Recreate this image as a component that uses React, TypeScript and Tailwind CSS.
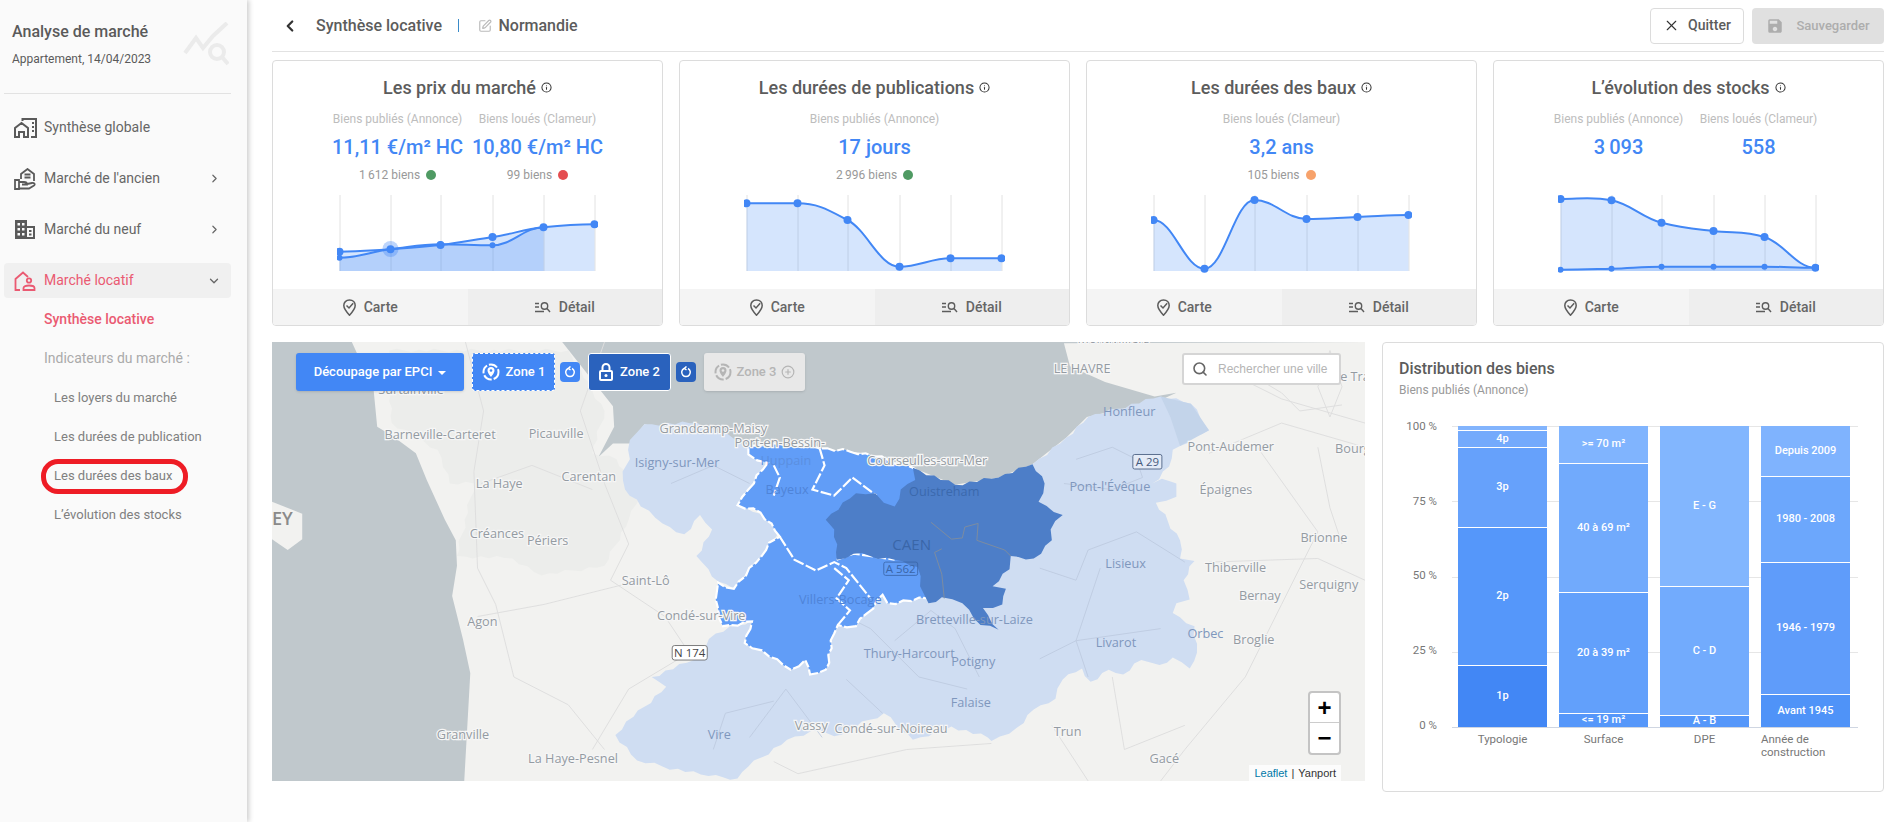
import { ChevronDown, ChevronLeft, ChevronRight, CirclePlus, Info, Search, SquarePen, X } from "lucide-react";
import { MdSave } from "react-icons/md";

const XS = [0, 51, 101, 153, 204, 255];

const smooth = (ys: number[]) => {
  const pts = ys.map((y, i) => [XS[i], y]);
  let d = `M${pts[0][0]} ${pts[0][1]}`;
  for (let i = 0; i < pts.length - 1; i++) {
    const p0 = pts[Math.max(i - 1, 0)];
    const p1 = pts[i];
    const p2 = pts[i + 1];
    const p3 = pts[Math.min(i + 2, pts.length - 1)];
    const flat1 = (p1[1] - p0[1]) * (p2[1] - p1[1]) <= 0;
    const flat2 = (p2[1] - p1[1]) * (p3[1] - p2[1]) <= 0;
    const c1y = p1[1] + (flat1 ? 0 : (p2[1] - p0[1]) / 6);
    const c2y = p2[1] - (flat2 ? 0 : (p3[1] - p1[1]) / 6);
    d += `C${p1[0] + 20} ${c1y} ${p2[0] - 20} ${c2y} ${p2[0]} ${p2[1]}`;
  }
  return d;
};

const Spark = ({ series, halo }: { series: { ys: number[]; r: number }[]; halo?: boolean }) => (
  <svg width="261" height="80" viewBox="-2.500 0 261 80" className="mx-auto mt-3 block">
    {XS.map((x) => (
      <line key={x} x1={x + 0.5} x2={x + 0.5} y1="0" y2="76" stroke="#e2e2e2" strokeWidth="1" />
    ))}
    {series.map((s, i) => (
      <path key={i} d={`${smooth(s.ys)}L${XS[s.ys.length - 1]} 76L0 76Z`} fill="#4287f5" fillOpacity="0.22" />
    ))}
    {halo && <circle cx="51" cy="54" r="8" fill="#4287f5" fillOpacity="0.35" />}
    {series.map((s, i) => (
      <g key={i}>
        <path d={smooth(s.ys)} fill="none" stroke="#4287f5" strokeWidth="2" />
        {s.ys.map((y, j) => (
          <circle key={j} cx={XS[j]} cy={y} r={s.r} fill="#4287f5" />
        ))}
      </g>
    ))}
  </svg>
);

const PinCheckIcon = () => (
  <svg width="13" height="17" viewBox="0 0 13 17" fill="none" stroke="#5c5c5c" strokeWidth="1.500">
    <path d="M6.500 1C3 1 .8 3.500.8 6.500c0 3.500 5.700 9.700 5.700 9.700s5.700-6.200 5.700-9.700C12.200 3.500 10 1 6.500 1z" />
    <path d="M3.500 6.500l2.500 2.500 4.200-4.800" />
  </svg>
);

const DetailIcon = () => (
  <svg width="16" height="14" viewBox="0 0 16 14" fill="none" stroke="#5c5c5c" strokeWidth="1.400">
    <path d="M0 3.500h4M0 7h4M0 11.500h9" />
    <circle cx="9.500" cy="6" r="3.200" />
    <path d="M12 8.500l3 3.500" />
  </svg>
);

type Col = { label: string; value: string; biens?: string; dot?: string };

const Card = ({ title, cols, children }: { title: string; cols: Col[]; children: React.ReactNode }) => (
  <div className="flex h-[266px] flex-col overflow-hidden rounded border border-[#dcdcdc] bg-white">
    <div className="mt-[15px] flex h-[22px] items-center justify-center gap-[5px] text-[18px] font-medium text-[#5c5c5c]">
      {title}
      <Info size={11} strokeWidth={2.2} className="text-[#333]" />
    </div>
    <div className="flex justify-center">
      {cols.map((c) => (
        <div key={c.label} className="w-[140px] text-center">
          <div className="mt-[13px] h-4 text-[12px] leading-4 whitespace-nowrap text-[#bdbdbd]">{c.label}</div>
          <div className="mt-[6px] h-7 text-[20px] leading-7 font-medium whitespace-nowrap text-[#4287f5]">{c.value}</div>
          <div className="mt-[6px] flex h-4 items-center justify-center gap-[6px] text-[12px] text-[#999]">
            {c.biens}
            {c.dot && <span className={`h-[10px] w-[10px] rounded-full ${c.dot}`} />}
          </div>
        </div>
      ))}
    </div>
    {children}
    <div className="mt-auto flex h-9 text-[14px] font-medium text-[#666]">
      <div className="flex flex-1 items-center justify-center gap-2 bg-[#f4f4f4]">
        <PinCheckIcon />
        Carte
      </div>
      <div className="flex flex-1 items-center justify-center gap-2 bg-[#eeeeee]">
        <DetailIcon />
        Détail
      </div>
    </div>
  </div>
);

const NavRow = ({ icon, label, chevron }: { icon: React.ReactNode; label: string; chevron?: boolean }) => (
  <div className="mb-4 ml-1 flex h-[35px] w-[227px] items-center text-[14px] text-[#666]">
    <span className="flex w-10 justify-center pl-[2px]">{icon}</span>
    {label}
    {chevron && <ChevronRight size={13} strokeWidth={2.2} className="ml-auto mr-[10px] text-[#666]" />}
  </div>
);

const Sidebar = () => (
  <aside className="z-10 w-[247px] shrink-0 bg-[#fafafa] shadow-[2px_0_5px_rgba(0,0,0,0.2)]">
    <div className="relative mx-1 h-[94px] w-[227px] border-b border-[#e2e2e2] pl-2 pt-[22px]">
      <div className="h-5 text-[16px] leading-5 font-medium text-[#5a5a5a]">Analyse de marché</div>
      <div className="mt-[9px] text-[12px] leading-4 text-[#5a5a5a]">Appartement, 14/04/2023</div>
      <svg width="46" height="44" viewBox="0 0 46 44" fill="none" stroke="#ebebeb" strokeWidth="4" className="absolute left-[179px] top-[22px]">
        <path d="M2 31L13 16l7 10 10-12L44 1" />
        <circle cx="34" cy="30" r="7" />
        <path d="M39 35l6 7" />
      </svg>
    </div>
    <div className="pt-4">
      <NavRow
        label="Synthèse globale"
        icon={
          <svg width="23" height="20" viewBox="0 0 23 20" fill="none" stroke="#5a5a5a" strokeWidth="2">
            <path d="M1 19v-9l6.500-5 6.500 5v9h-4v-5H5v5z" />
            <path d="M8.500 3V1H22v18h-5" />
            <path d="M18 5h2M18 9h2M18 13h2" />
          </svg>
        }
      />
      <NavRow
        chevron
        label="Marché de l'ancien"
        icon={
          <svg width="22" height="22" viewBox="0 0 22 22" fill="none" stroke="#5a5a5a" strokeWidth="1.800">
            <path d="M7 11V6l6.500-5L20 6v7" />
            <path d="M10.500 6.500h6M10.500 9.500h6" />
            <path d="M1 12h4v9H1zM5 14h5c2 0 3 1 3 2.500H8M13 16l5-1c2.500-.3 3.500 1.500 2 2.500L15 20.500H5" />
          </svg>
        }
      />
      <NavRow
        chevron
        label="Marché du neuf"
        icon={
          <svg width="20" height="19" viewBox="0 0 20 19" fill="#5a5a5a">
            <path fillRule="evenodd" d="M0 0h12v6h8v13H0zM2.500 3v2.500H5V3zM7 3v2.500h2.500V3zM2.500 8v2.500H5V8zM7 8v2.500h2.500V8zM2.500 13v2.500H5V13zM7 13v2.500h2.500V13zM12 8v9h6V8zM14 10h2.500v2H14zM14 13.500h2.500v2H14z" />
          </svg>
        }
      />
      <div className="ml-1 flex h-[35px] w-[227px] items-center rounded bg-[#f0f0f0] text-[14px] text-[#ea5a72]">
        <span className="flex w-10 justify-center pl-[2px]">
          <svg width="22" height="20" viewBox="0 0 22 20" fill="none" stroke="#ea5a72" strokeWidth="1.800">
            <path d="M6 19H1.500V8L9 1.500l5 4.500" />
            <circle cx="15" cy="9.500" r="2.200" />
            <path d="M9.500 19v-2c0-1.700 2.500-2.500 5.500-2.500s5.500.8 5.500 2.500v2z" />
          </svg>
        </span>
        Marché locatif
        <ChevronDown size={14} strokeWidth={2.2} className="ml-auto mr-[10px] text-[#666]" />
      </div>
      <div className="mt-[9px] flex flex-col gap-[15px] pl-11 text-[14px]">
        <div className="h-6 leading-6 font-medium text-[#ea5a72]">Synthèse locative</div>
        <div className="h-6 leading-6 text-[#aaaaaa]">Indicateurs du marché :</div>
        {["Les loyers du marché", "Les durées de publication", "Les durées des baux", "L’évolution des stocks"].map((t) => (
          <div key={t} className="relative top-[1px] h-6 pl-[10px] text-[13px] leading-6 text-[#808080]">
            {t}
            {t === "Les durées des baux" && (
              <span className="absolute -left-[3px] -top-[5px] h-[35px] w-[147px] rounded-[17px] border-[5px] border-[#ee1c25]" />
            )}
          </div>
        ))}
      </div>
    </div>
  </aside>
);

const Header = () => (
  <div className="flex h-[52px] items-center border-b border-[#e2e2e2] text-[#5c5c5c]">
    <ChevronLeft size={18} strokeWidth={3} className="ml-[9px] text-[#333]" />
    <span className="ml-[17px] text-[16px] font-medium">Synthèse locative</span>
    <span className="ml-4 h-[13px] w-[1.500px] bg-[#3a8bc9]" />
    <SquarePen size={14} className="ml-[19px] text-[#bbbbbb]" />
    <span className="ml-[6px] text-[16px] font-medium">Normandie</span>
    <button className="ml-auto flex h-9 w-[94px] items-center justify-center gap-2 rounded border border-[#dcdcdc] bg-white text-[14px] font-medium text-[#5c5c5c]">
      <X size={17} strokeWidth={1.600} className="text-[#333]" />
      Quitter
    </button>
    <button className="ml-2 flex h-9 w-[132px] items-center justify-center gap-3 rounded bg-[#e0e0e0] text-[13px] font-medium text-[#adadad]">
      <MdSave size={18} />
      Sauvegarder
    </button>
  </div>
);

const ZoneIcon = ({ color }: { color: string }) => (
  <svg width="18" height="18" viewBox="0 0 18 18" fill="none">
    <circle cx="9" cy="9" r="7.500" stroke={color} strokeWidth="2" strokeDasharray="9 2" />
    <path d="M9 4a3.500 3.500 0 0 1 3.500 3.500C12.500 10 9 14 9 14S5.500 10 5.500 7.500A3.500 3.500 0 0 1 9 4z" fill={color} />
    <circle cx="9" cy="7.500" r="1.300" fill={color === "#fff" ? "#4287f5" : "#e8e8e8"} />
  </svg>
);

const LockIcon = () => (
  <svg width="14" height="18" viewBox="0 0 14 18" fill="none" stroke="#fff" strokeWidth="2">
    <path d="M3.500 8V4.500a3.500 3.500 0 0 1 7 0V8" />
    <rect x="1" y="8" width="12" height="9" rx="1" />
    <circle cx="7" cy="12.500" r="1.500" fill="#fff" stroke="none" />
  </svg>
);

const ResetBtn = ({ bg }: { bg: string }) => (
  <span className={`flex h-5 w-5 items-center justify-center rounded-sm ${bg}`}>
    <svg width="12" height="12" viewBox="0 0 12 12" fill="none" stroke="#fff" strokeWidth="1.500">
      <path d="M4 2.500A4.300 4.300 0 1 0 8 2.500" />
      <path d="M6.500 0.500L4.300 2.400 6.500 4" />
    </svg>
  </span>
);

// roughens a polygon so the borders look like real boundaries
const rough = (p: number[][]) => {
  const out: number[][] = [];
  p.forEach((a, i) => {
    const b = p[(i + 1) % p.length];
    const dx = b[0] - a[0];
    const dy = b[1] - a[1];
    const len = Math.hypot(dx, dy) || 1;
    const n = Math.max(1, Math.floor(len / 6));
    out.push(a);
    for (let k = 1; k < n; k++) {
      const off = (((i + k) * 7) % 5 - 2) * 0.75;
      out.push([a[0] + (dx * k) / n - (dy / len) * off, a[1] + (dy * k) / n + (dx / len) * off]);
    }
  });
  return out;
};

const Pt = (p: number[][]) => p.map((q) => `${q[0].toFixed(1)},${q[1].toFixed(1)}`).join(" ");

const LIGHT = [[854,384],[882,362],[900,345],[960,328],[985,334],[1000,356],[976,369],[970,372],[967,386],[953,400],[961,396],[973,400],[973,411],[956,416],[976,447],[976,462],[988,464],[979,480],[984,496],[973,499],[970,507],[988,518],[990,540],[984,553],[970,544],[959,550],[944,546],[929,558],[917,554],[902,564],[895,553],[879,562],[873,578],[855,587],[841,602],[820,613],[817,610],[787,601],[755,612],[731,590],[690,609],[678,604],[651,612],[619,634],[610,644],[586,642],[548,634],[527,629],[509,608],[524,593],[551,568],[539,560],[574,546],[592,524],[622,513],[640,500],[700,470],[800,440]];
const ISIGNY = [[533,351],[577,350],[619,368],[619,376],[635,383],[630,391],[619,405],[610,418],[629,425],[645,438],[636,449],[630,463],[619,471],[607,487],[594,481],[586,471],[576,460],[589,438],[579,426],[566,442],[548,433],[530,419],[517,405],[515,390],[521,380],[521,364]];
const BLUE = [[619,369],[645,367],[678,371],[716,375],[755,387],[800,440],[767,495],[734,499],[730,492],[708,518],[693,517],[690,524],[683,554],[670,558],[666,546],[654,554],[636,543],[616,532],[622,514],[598,518],[592,496],[594,482],[607,487],[630,460],[636,449],[645,444],[629,424],[610,418],[619,405],[635,383],[619,376]];
const DARK = [[755,387],[790,401],[826,395],[854,384],[864,400],[859,415],[879,426],[869,438],[870,447],[855,462],[836,460],[835,471],[821,485],[832,487],[829,500],[813,503],[826,521],[811,517],[796,499],[779,494],[768,499],[761,485],[759,469],[740,463],[706,458],[692,463],[690,438],[683,430],[708,408],[724,408],[731,416],[740,419],[745,405],[757,397]];

const LABELS: [string, number, number, string?][] = [
  ["LE HAVRE", 895, 309], ["Montivilliers", 921, 284], ["Surtainville", 340, 326], ["Grandcamp-Maisy", 590, 358], ["Port-en-Bessin-", 645, 370],
  ["Huppain", 650, 385, "#5b8fe0"], ["Courseulles-sur-Mer", 767, 385], ["Honfleur", 934, 344, "#7f97bd"], ["Pont-Audemer", 1018, 373], ["Barneville-Carteret", 364, 363],
  ["Picauville", 460, 362], ["Isigny-sur-Mer", 560, 386, "#7f97bd"], ["Carentan", 487, 398], ["La Haye", 413, 404], ["Bayeux", 651, 409, "#4f84d8"],
  ["Ouistreham", 781, 410, "#3b69ad"], ["Pont-l'Évêque", 918, 406, "#7f97bd"], ["Épaignes", 1014, 409], ["Créances", 411, 445], ["Périers", 453, 451],
  ["Brionne", 1095, 448], ["Lisieux", 931, 470, "#7f97bd"], ["Thiberville", 1022, 473], ["Saint-Lô", 534, 484], ["Villers-Bocage", 695, 500, "#4f84d8"],
  ["Serquigny", 1099, 487], ["Bernay", 1042, 496], ["Condé-sur-Vire", 580, 513], ["Agon", 399, 518], ["Bretteville-sur-Laize", 806, 516, "#7f97bd"],
  ["Livarot", 923, 535, "#7f97bd"], ["Orbec", 997, 528, "#7f97bd"], ["Broglie", 1037, 533], ["Thury-Harcourt", 752, 544, "#7f97bd"], ["Potigny", 805, 551, "#7f97bd"],
  ["Falaise", 803, 585, "#7f97bd"], ["Granville", 383, 611], ["Vire", 595, 611, "#7f97bd"], ["Vassy", 671, 604], ["Condé-sur-Noireau", 737, 606],
  ["Trun", 883, 609], ["La Haye-Pesnel", 474, 631], ["Gacé", 963, 631], ["Bourg", 1119, 375], ["Le Tra", 1118, 315],
];

const ROADS = [
  "M385 283L400 340L392 390L395 470L410 500L425 560L470 583L500 620",
  "M500 283L480 340L500 400L520 450L505 480L550 510L570 540L520 570L490 620",
  "M395 510L450 500L530 480",
  "M398 400L440 385L490 405",
  "M1000 375L1060 350L1129 370",
  "M1000 300L1060 330L1129 350",
  "M1040 370L1090 440L1060 500L1030 560L980 620L960 646",
  "M1000 465L1090 462L1129 480",
  "M1090 370L1100 420L1110 450",
  "M870 600L900 646",
  "M640 630L660 640L750 620L820 615",
  "M920 560L930 620L980 600",
  "M1035 310L1060 325L1075 340L1110 335",
  "M1100 290L1090 320L1100 345L1110 320L1100 290",
];
const INNER = [
  "M682 500L700 510L720 520L760 560L800 570",
  "M700 562L730 590M740 530L770 505L790 520L810 560",
  "M860 470L890 480L900 455L940 440L980 465",
  "M890 380L920 370L940 380L945 395L920 405L880 400",
  "M910 470L890 530L900 560",
  "M860 545L890 530L960 520",
  "M620 610L650 570L680 610",
  "M590 620L600 590L640 580",
  "M555 400L590 385L620 400",
];
const DASH = [
  "M645 444L657 463L675 472L690 465L700 470L720 495",
  "M692 463L706 458L740 463",
  "M678 371L682 385L672 405L690 410L705 395L725 410",
  "M690 470L702 480L692 495L703 505L693 517",
  "M640 385L645 395L640 410",
];

const MapPanel = () => (
  <div className="relative h-[439px] w-[1093px] shrink-0 overflow-hidden bg-[#c0c8cc]">
    <svg viewBox="225 283 904 363" className="absolute inset-0 h-full w-full font-['Open_Sans',sans-serif]">
      <polygon
        fill="#f2f2f0"
        points="291,283 309,322 312,353 325,361 344,375 353,397 368,430 377,447 378,468 374,493 383,529 389,557 384,646 1129,646 1129,283 880,284 885,303 914,316 955,328 973,325 960,331 899,345 882,362 854,384 826,395 790,401 755,387 716,375 678,371 619,368 577,361 533,351 521,367 507,367 495,378 508,353 507,336 465,283"
      />
      <polygon fill="#f2f2f0" points="225,415 250,425 250,446 238,455 225,446" />
      <polygon fill="#ecedeb" points={Pt(rough([[322,290],[324,350],[362,372],[372,400],[392,400],[378,460],[424,462],[448,476],[500,468],[520,430],[530,410],[510,380],[490,375],[500,340],[470,290]]))} />
      {ROADS.map((d) => (
        <path key={d} d={d} fill="none" stroke="#dedede" strokeWidth="0.8" />
      ))}
      <polygon fill="#cfddf2" points={Pt(rough(LIGHT))} />
      <polygon fill="#cfddf2" points={Pt(rough(ISIGNY))} />
      <polygon fill="#c3d4ea" points="960,328 985,334 1000,356 976,369 968,345" />
      {INNER.map((d) => (
        <path key={d} d={d} fill="none" stroke="#bccadf" strokeWidth="0.7" />
      ))}
      <polygon fill="#619df7" points={Pt(rough(BLUE))} />
      <polygon fill="none" stroke="#fff" strokeWidth="1.800" strokeDasharray="11 2 6 2" points={Pt(rough(BLUE))} />
      {DASH.map((d) => (
        <path key={d} d={d} fill="none" stroke="#fff" strokeWidth="1.800" strokeDasharray="9 2" />
      ))}
      <polygon fill="#4d7ec8" points={Pt(rough(DARK))} />
      <path d="M770 432L787 446L796 445L798 436L809 433L808 447L831 455L836 460M779 454L773 457L779 475L781 495" fill="none" stroke="#7d8c9f" strokeWidth="0.8" />
      {LABELS.map(([t, x, y, c]) => (
        <text key={t} x={x} y={y} textAnchor="middle" fontSize="10.500" fill={c ?? "#949ba2"} stroke={c ? "none" : "#f6f6f6"} strokeWidth="2" paintOrder="stroke">
          {t}
        </text>
      ))}
      <text x="754" y="455" textAnchor="middle" fontSize="12.500" fill="#3a66a8">CAEN</text>
      <text x="225" y="434" fontSize="15" fill="#8a8a8a" fontWeight="600">EY</text>
      <g fontSize="9.500" textAnchor="middle">
        <rect x="556" y="534" width="29" height="12" rx="2" fill="#fff" stroke="#666" strokeWidth="0.700" />
        <text x="570.500" y="543.500" fill="#444">N 174</text>
        <rect x="937" y="376" width="24" height="12" rx="1.500" fill="#e4ebf7" stroke="#44597c" strokeWidth="0.700" />
        <text x="949" y="385.500" fill="#44597c">A 29</text>
        <rect x="731" y="465" width="28" height="11" rx="1.500" fill="none" stroke="#3a66a8" strokeWidth="0.700" />
        <text x="745" y="474" fill="#3a66a8">A 562</text>
      </g>
    </svg>

    <div className="absolute left-6 top-[11px] flex items-center text-[13px] font-medium text-white">
      <div className="flex h-[38px] w-[168px] items-center justify-center gap-[6px] rounded-[3px] bg-[#4287f5] shadow-sm">
        Découpage par EPCI
        <span className="mt-[1px] h-0 w-0 border-x-[4px] border-t-[4px] border-x-transparent border-t-white" />
      </div>
      <div className="ml-2 flex h-[38px] w-[83px] items-center justify-center gap-[6px] rounded-[3px] border border-dashed border-white bg-[#4287f5]">
        <ZoneIcon color="#fff" />
        Zone 1
      </div>
      <div className="ml-[5px]"><ResetBtn bg="bg-[#4287f5]" /></div>
      <div className="ml-2 flex h-[38px] w-[83px] items-center justify-center gap-[7px] rounded-[3px] border border-white bg-[#2a62bd]">
        <LockIcon />
        Zone 2
      </div>
      <div className="ml-[5px]"><ResetBtn bg="bg-[#2a62bd]" /></div>
      <div className="ml-2 flex h-[38px] w-[101px] items-center justify-center gap-[5px] rounded-[3px] bg-[#e8e8e8] text-[#b5b5b5] shadow-sm">
        <ZoneIcon color="#b5b5b5" />
        Zone 3
        <CirclePlus size={14} />
      </div>
    </div>

    <div className="absolute right-6 top-[11px] flex h-8 w-[159px] items-center gap-[10px] rounded-[3px] border-2 border-[#d5d5d5] bg-white pl-2 text-[12px] text-[#b5b5b5] [font-family:'Liberation_Sans',sans-serif]">
      <Search size={16} strokeWidth={2.400} className="text-[#666]" />
      Rechercher une ville
    </div>

    <div className="absolute bottom-[26px] right-6 flex w-[33px] flex-col rounded border-2 border-[#c4c4c4] bg-white bg-clip-padding text-[24px] font-bold text-black [font-family:'Liberation_Sans',sans-serif]">
      <span className="flex h-[30px] items-center justify-center border-b border-[#ccc] leading-none">+</span>
      <span className="flex h-[30px] items-center justify-center leading-none">−</span>
    </div>

    <div className="absolute bottom-0 right-6 flex h-4 items-center bg-white/80 px-[5px] text-[11px] text-[#333] [font-family:'Liberation_Sans',sans-serif]">
      <span className="text-[#0078a8]">Leaflet</span>
      <span className="mx-1">|</span>
      Yanport
    </div>
  </div>
);

type Seg = { h: number; label: string; bg: string };

const BARS: { name: string; segs: Seg[] }[] = [
  {
    name: "Typologie",
    segs: [
      { h: 1.6, label: "", bg: "bg-[#82b4fd]" },
      { h: 5.7, label: "4p", bg: "bg-[#74aafc]" },
      { h: 26.7, label: "3p", bg: "bg-[#66a1fb]" },
      { h: 45.6, label: "2p", bg: "bg-[#5597fa]" },
      { h: 20.4, label: "1p", bg: "bg-[#4287f5]" },
    ],
  },
  {
    name: "Surface",
    segs: [
      { h: 12.7, label: ">= 70 m²", bg: "bg-[#80b4fe]" },
      { h: 42.7, label: "40 à 69 m²", bg: "bg-[#71aafc]" },
      { h: 40.3, label: "20 à 39 m²", bg: "bg-[#62a0fb]" },
      { h: 4.3, label: "<= 19 m²", bg: "bg-[#5597fa]" },
    ],
  },
  {
    name: "DPE",
    segs: [
      { h: 53.4, label: "E - G", bg: "bg-[#82b6fe]" },
      { h: 43, label: "C - D", bg: "bg-[#72abfd]" },
      { h: 3.6, label: "A - B", bg: "bg-[#5597fa]" },
    ],
  },
  {
    name: "Année de construction",
    segs: [
      { h: 17, label: "Depuis 2009", bg: "bg-[#7fb3fe]" },
      { h: 28.4, label: "1980 - 2008", bg: "bg-[#6ca7fc]" },
      { h: 44, label: "1946 - 1979", bg: "bg-[#5f9cfa]" },
      { h: 10.6, label: "Avant 1945", bg: "bg-[#4f93f8]" },
    ],
  },
];

const Distribution = () => (
  <div className="h-[450px] flex-1 rounded border border-[#dcdcdc] bg-white pl-4 pt-[15px]">
    <div className="text-[16px] leading-[22px] font-medium text-[#5c5c5c]">Distribution des biens</div>
    <div className="text-[12px] leading-[20px] text-[#999]">Biens publiés (Annonce)</div>
    <div className="mt-[26px] flex">
      <div className="-mt-[5px] flex h-[310px] w-[38px] flex-col justify-between text-right text-[11.500px] leading-none text-[#777]">
        <span>100 %</span>
        <span>75 %</span>
        <span>50 %</span>
        <span>25 %</span>
        <span>0 %</span>
      </div>
      <div className="ml-[15px] w-[406px]">
        <div className="relative flex h-[302px] gap-3 border-b border-[#cfd6e2] px-[6px]">
          {[0, 75, 151, 226].map((t) => (
            <span key={t} className="absolute inset-x-0 border-t border-[#e6e6e6]" style={{ top: t }} />
          ))}
          {BARS.map((b) => (
            <div key={b.name} className="relative flex w-[89px] flex-col">
              {b.segs.map((s) => (
                <div
                  key={s.label + s.h}
                  className={`flex items-center justify-center overflow-hidden border-b border-white text-[11px] font-medium whitespace-nowrap text-white last:border-b-0 ${s.bg}`}
                  style={{ height: `${s.h}%` }}
                >
                  {s.label}
                </div>
              ))}
            </div>
          ))}
        </div>
        <div className="mt-[5px] flex gap-3 px-[6px] text-[11.500px] leading-[13px] text-[#777]">
          {BARS.map((b, i) => (
            <div key={b.name} className={`w-[89px] ${i === 3 ? "text-left" : "text-center"}`}>{b.name}</div>
          ))}
        </div>
      </div>
    </div>
  </div>
);

export default function App() {
  return (
    <div className="flex h-[822px] w-[1896px] overflow-hidden bg-white [font-family:Roboto,sans-serif]">
      <Sidebar />
      <main className="flex-1 pl-[25px] pr-3">
        <Header />
        <div className="mt-2 grid grid-cols-4 gap-4">
          <Card
            title="Les prix du marché"
            cols={[
              { label: "Biens publiés (Annonce)", value: "11,11 €/m² HC", biens: "1\u2009612 biens", dot: "bg-[#4f9a63]" },
              { label: "Biens loués (Clameur)", value: "10,80 €/m² HC", biens: "99 biens", dot: "bg-[#e44d50]" },
            ]}
          >
            <Spark
              halo
              series={[
                { ys: [62.7, 54.3, 49.3, 50.3, 32.3], r: 3 },
                { ys: [56.7, 54.3, 50, 42, 32.3, 29.3], r: 4 },
              ]}
            />
          </Card>
          <Card title="Les durées de publications" cols={[{ label: "Biens publiés (Annonce)", value: "17 jours", biens: "2\u2009996 biens", dot: "bg-[#4f9a63]" }]}>
            <Spark series={[{ ys: [8.3, 8.3, 25, 71.7, 63.3, 63.3], r: 4 }]} />
          </Card>
          <Card title="Les durées des baux" cols={[{ label: "Biens loués (Clameur)", value: "3,2 ans", biens: "105 biens", dot: "bg-[#f7a26b]" }]}>
            <Spark series={[{ ys: [25, 73.7, 5, 24, 22, 20], r: 4 }]} />
          </Card>
          <Card
            title="L’évolution des stocks"
            cols={[
              { label: "Biens publiés (Annonce)", value: "3\u2009093" },
              { label: "Biens loués (Clameur)", value: "558" },
            ]}
          >
            <Spark
              series={[
                { ys: [4, 5.3, 27.7, 36, 42, 72.7], r: 4 },
                { ys: [74.7, 73.7, 71.7, 71.7, 71.7, 72.7], r: 3 },
              ]}
            />
          </Card>
        </div>
        <div className="mt-4 flex gap-[17px]">
          <MapPanel />
          <Distribution />
        </div>
      </main>
    </div>
  );
}
